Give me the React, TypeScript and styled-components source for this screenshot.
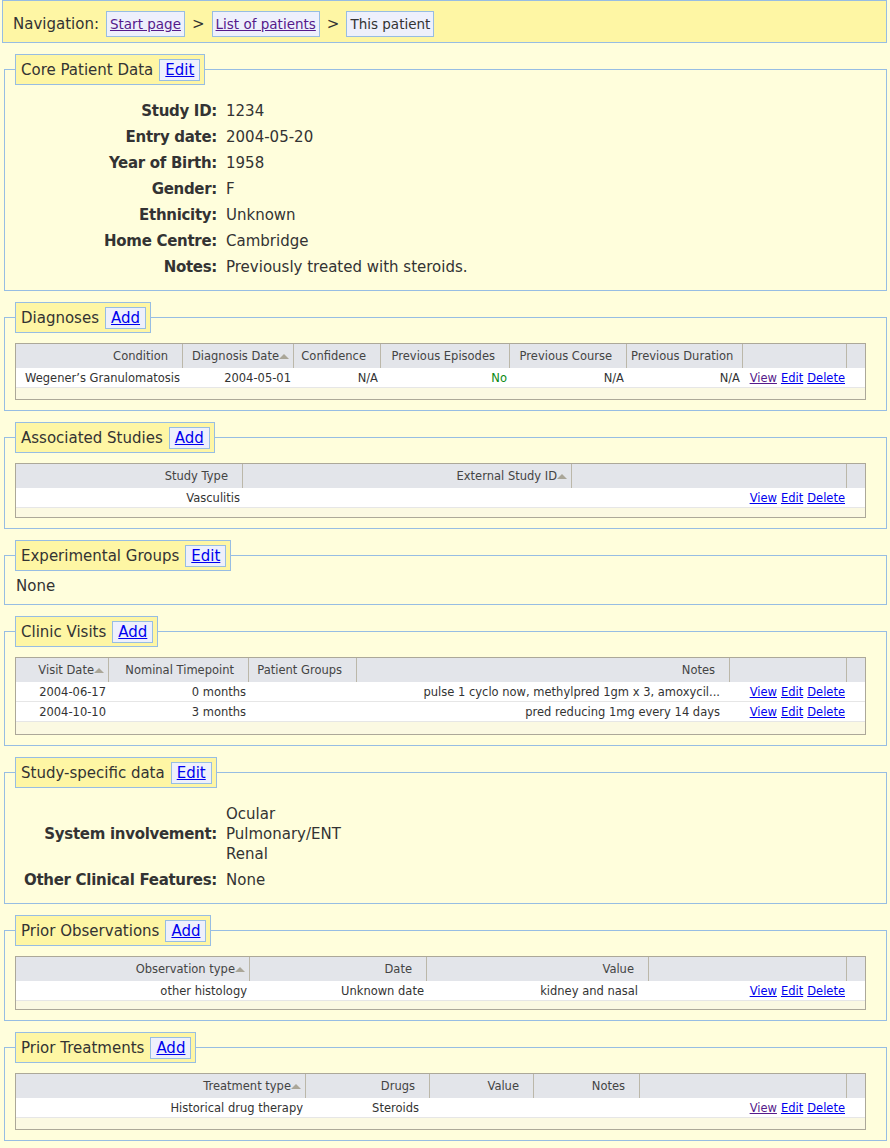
import { Fragment } from 'react';
import styled, { createGlobalStyle } from 'styled-components';

const GlobalStyle = createGlobalStyle`
  body {
    margin: 0;
    background: #fffedc;
    font-family: "DejaVu Sans", "Liberation Sans", sans-serif;
    color: #333;
  }
`;

const Page = styled.div`
  display: flex;
  flex-direction: column;
  gap: 11px;
  padding: 0 3px 8px 2px;
`;

const NavBar = styled.nav`
  display: flex;
  align-items: center;
  gap: 7px;
  height: 36px;
  padding: 5px 10px 0;
  background: #fef6a4;
  border: 1px solid #97bde3;
  font-size: 15px;
`;

const Crumb = styled.span`
  display: inline-block;
  line-height: 24px;
  padding: 0 3px;
  background: #eef0fc;
  border: 1px solid #97bde3;
  font-size: 13.5px;
`;

const Link = styled.a<{ $visited?: boolean }>`
  color: ${(p) => (p.$visited ? '#551a8b' : '#0000ee')};
  text-decoration: underline;
  cursor: pointer;
`;

const Section = styled.fieldset<{ $pb?: number }>`
  margin: 0 0 0 2px;
  min-width: 0;
  padding: 0 10px ${(p) => p.$pb ?? 10}px 10px;
  border: 1px solid #97bde3;
`;

const Legend = styled.legend`
  padding: 4px 4px 3px 5px;
  background: #fef6a4;
  border: 1px solid #97bde3;
  font-size: 15px;
  line-height: 20px;
`;

const LegendRow = styled.span`
  display: flex;
  align-items: center;
  gap: 6px;
`;

const LegendButton = styled.span`
  display: inline-block;
  padding: 0 5px;
  background: #eef0fc;
  border: 1px solid #97bde3;
`;

const InfoGrid = styled.div`
  display: grid;
  grid-template-columns: 202px 1fr;
  column-gap: 9px;
  margin: 13px 0 0;
  font-size: 15px;
  line-height: 20px;
`;

const InfoLabel = styled.div`
  align-self: center;
  padding: 3px 0;
  font-weight: bold;
  letter-spacing: -0.3px;
  text-align: right;
`;

const InfoValue = styled.div`
  padding: 3px 0;
`;

const Plain = styled.div`
  margin-top: 5px;
  padding-left: 1px;
  font-size: 15px;
  line-height: 20px;
`;

const TableBox = styled.div<{ $strip: number }>`
  width: 849px;
  margin-top: 10px;
  padding-bottom: ${(p) => p.$strip}px;
  background: #fbf9e2;
  border: 1px solid #aca899;
`;

const Grid = styled.table`
  width: 849px;
  table-layout: fixed;
  border-collapse: separate;
  border-spacing: 0;
  font-size: 11.5px;
`;

const Col = styled.col<{ $w: number }>`
  width: ${(p) => p.$w}px;
`;

const Th = styled.th<{ $last?: boolean }>`
  padding: 1px 4px 0;
  line-height: 23px;
  background: #e3e5ea;
  border-right: ${(p) => (p.$last ? 'none' : '1px solid #bbb7a9')};
  color: #444;
  font-weight: normal;
  text-align: right;
  white-space: nowrap;
  overflow: hidden;
`;

const SortSlot = styled.span<{ $on?: boolean }>`
  display: inline-block;
  width: 10px;
  height: 10px;
  vertical-align: middle;
  position: relative;
  &::after {
    content: '';
    display: ${(p) => (p.$on ? 'block' : 'none')};
    position: absolute;
    left: 0;
    top: 2px;
    border-left: 5px solid transparent;
    border-right: 5px solid transparent;
    border-bottom: 5px solid #aaa698;
  }
`;

const Td = styled.td<{ $pad?: number; $green?: boolean }>`
  padding: 1px ${(p) => p.$pad ?? 3}px 0 3px;
  line-height: 18px;
  background: #fff;
  border-bottom: 1px solid #e6e6e6;
  color: ${(p) => (p.$green ? '#0b8a12' : '#333')};
  text-align: right;
  white-space: nowrap;
  overflow: hidden;
`;

const Actions = styled.span`
  display: inline-flex;
  gap: 4px;
`;

type Column = { title: string; width: number; sorted?: boolean; pad?: number };
type Row = { cells: string[]; viewVisited?: boolean; green?: number };

function DataTable({
  cols,
  actionsWidth,
  rows,
  strip = 11,
}: {
  cols: Column[];
  actionsWidth: number;
  rows: Row[];
  strip?: number;
}) {
  return (
    <TableBox $strip={strip}>
      <Grid>
        <colgroup>
          {cols.map((c) => (
            <Col key={c.title} $w={c.width} />
          ))}
          <Col $w={actionsWidth} />
          <Col $w={18} />
        </colgroup>
        <thead>
          <tr>
            {cols.map((c) => (
              <Th key={c.title}>
                {c.title}
                <SortSlot $on={c.sorted} />
              </Th>
            ))}
            <Th />
            <Th $last />
          </tr>
        </thead>
        <tbody>
          {rows.map((r, i) => (
            <tr key={i}>
              {r.cells.map((cell, j) => (
                <Td key={j} $pad={cols[j].pad} $green={r.green === j}>
                  {cell}
                </Td>
              ))}
              <Td $pad={2}>
                <Actions>
                  <Link $visited={r.viewVisited}>View</Link>
                  <Link>Edit</Link>
                  <Link>Delete</Link>
                </Actions>
              </Td>
              <Td />
            </tr>
          ))}
        </tbody>
      </Grid>
    </TableBox>
  );
}

function SectionTitle({ title, action }: { title: string; action: string }) {
  return (
    <Legend>
      <LegendRow>
        {title}
        <LegendButton>
          <Link>{action}</Link>
        </LegendButton>
      </LegendRow>
    </Legend>
  );
}

const coreData: [string, string][] = [
  ['Study ID:', '1234'],
  ['Entry date:', '2004-05-20'],
  ['Year of Birth:', '1958'],
  ['Gender:', 'F'],
  ['Ethnicity:', 'Unknown'],
  ['Home Centre:', 'Cambridge'],
  ['Notes:', 'Previously treated with steroids.'],
];

export default function App() {
  return (
    <>
      <GlobalStyle />
      <Page>
        <NavBar>
          <span>Navigation:</span>
          <Crumb>
            <Link $visited>Start page</Link>
          </Crumb>
          <span>&gt;</span>
          <Crumb>
            <Link $visited>List of patients</Link>
          </Crumb>
          <span>&gt;</span>
          <Crumb>This patient</Crumb>
        </NavBar>

        <Section>
          <SectionTitle title="Core Patient Data" action="Edit" />
          <InfoGrid>
            {coreData.map(([k, v]) => (
              <Fragment key={k}>
                <InfoLabel>{k}</InfoLabel>
                <InfoValue>{v}</InfoValue>
              </Fragment>
            ))}
          </InfoGrid>
        </Section>

        <Section>
          <SectionTitle title="Diagnoses" action="Add" />
          <DataTable
            cols={[
              { title: 'Condition', width: 167 },
              { title: 'Diagnosis Date', width: 111, sorted: true },
              { title: 'Confidence', width: 87 },
              { title: 'Previous Episodes', width: 129 },
              { title: 'Previous Course', width: 117 },
              { title: 'Previous Duration', width: 116 },
            ]}
            actionsWidth={104}
            rows={[
              {
                cells: ['Wegener\u2019s Granulomatosis', '2004-05-01', 'N/A', 'No', 'N/A', 'N/A'],
                viewVisited: true,
                green: 3,
              },
            ]}
          />
        </Section>

        <Section>
          <SectionTitle title="Associated Studies" action="Add" />
          <DataTable
            cols={[
              { title: 'Study Type', width: 227 },
              { title: 'External Study ID', width: 329, sorted: true },
            ]}
            actionsWidth={275}
            strip={9}
            rows={[{ cells: ['Vasculitis', ''] }]}
          />
        </Section>

        <Section $pb={8}>
          <SectionTitle title="Experimental Groups" action="Edit" />
          <Plain>None</Plain>
        </Section>

        <Section>
          <SectionTitle title="Clinic Visits" action="Add" />
          <DataTable
            cols={[
              { title: 'Visit Date', width: 93, sorted: true },
              { title: 'Nominal Timepoint', width: 140 },
              { title: 'Patient Groups', width: 108 },
              { title: 'Notes', width: 373, pad: 10 },
            ]}
            actionsWidth={117}
            strip={12}
            rows={[
              {
                cells: ['2004-06-17', '0 months', '', 'pulse 1 cyclo now, methylpred 1gm x 3, amoxycil...'],
              },
              { cells: ['2004-10-10', '3 months', '', 'pred reducing 1mg every 14 days'] },
            ]}
          />
        </Section>

        <Section>
          <SectionTitle title="Study-specific data" action="Edit" />
          <InfoGrid>
            <InfoLabel>System involvement:</InfoLabel>
            <InfoValue>
              Ocular
              <br />
              Pulmonary/ENT
              <br />
              Renal
            </InfoValue>
            <InfoLabel>Other Clinical Features:</InfoLabel>
            <InfoValue>None</InfoValue>
          </InfoGrid>
        </Section>

        <Section>
          <SectionTitle title="Prior Observations" action="Add" />
          <DataTable
            cols={[
              { title: 'Observation type', width: 234, sorted: true },
              { title: 'Date', width: 177 },
              { title: 'Value', width: 222, pad: 11 },
            ]}
            actionsWidth={198}
            strip={8}
            rows={[{ cells: ['other histology', 'Unknown date', 'kidney and nasal'] }]}
          />
        </Section>

        <Section>
          <SectionTitle title="Prior Treatments" action="Add" />
          <DataTable
            cols={[
              { title: 'Treatment type', width: 290, sorted: true },
              { title: 'Drugs', width: 124, pad: 11 },
              { title: 'Value', width: 104 },
              { title: 'Notes', width: 106 },
            ]}
            actionsWidth={207}
            rows={[{ cells: ['Historical drug therapy', 'Steroids', '', ''], viewVisited: true }]}
          />
        </Section>
      </Page>
    </>
  );
}
